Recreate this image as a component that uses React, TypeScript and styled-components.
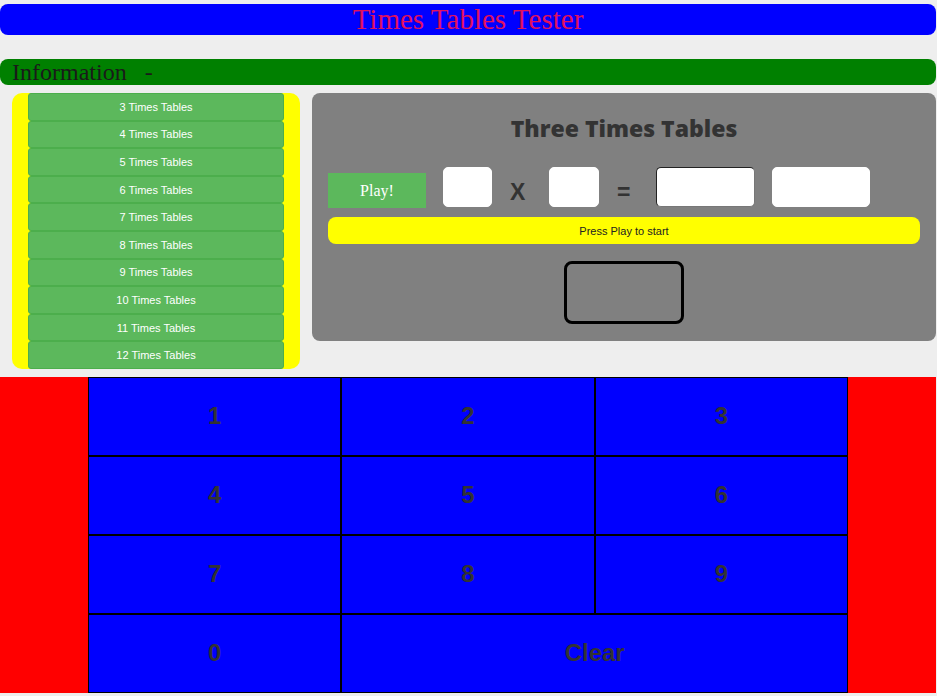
import React from "react";
import styled, { createGlobalStyle } from "styled-components";

const Global = createGlobalStyle`
  html, body { margin: 0; padding: 0; background: #eeeeee; }
  body { font-family: "Liberation Serif", serif; overflow: hidden; }
`;

const Page = styled.div`
  width: 936px;
  padding-top: 4px;
`;

const Header = styled.h1`
  margin: 0;
  height: 31px;
  background: #0000ff;
  border-radius: 8px;
  color: #e0115f;
  font-family: "Liberation Serif", serif;
  font-weight: normal;
  font-size: 29px;
  line-height: 31px;
  text-align: center;
`;

const InfoBar = styled.div`
  margin-top: 24px;
  height: 26px;
  background: #008000;
  border-radius: 8px;
  padding-left: 12px;
  color: #1a1a1a;
  font-family: "Liberation Serif", serif;
  font-size: 24px;
  line-height: 26px;
  white-space: pre;
`;

const Main = styled.div`
  display: flex;
  align-items: flex-start;
  gap: 12px;
  margin-top: 8px;
  padding-left: 12px;
`;

const TablesList = styled.div`
  width: 256px;
  padding: 0 16px;
  background: #ffff00;
  border-radius: 10px;
  display: flex;
  flex-direction: column;
`;

const TableButton = styled.button`
  height: 27.6px;
  box-sizing: border-box;
  background: #5cb85c;
  border: 1px solid #4cae4c;
  border-radius: 3px;
  color: #ffffff;
  font-family: "Liberation Sans", Arial, sans-serif;
  font-size: 11px;
  padding: 0;
  cursor: pointer;
`;

const GamePanel = styled.div`
  flex: 1;
  height: 248px;
  box-sizing: border-box;
  background: #808080;
  border-radius: 8px;
  padding: 20px 16px 0;
  display: flex;
  flex-direction: column;
  align-items: center;
`;

const GameTitle = styled.h2`
  margin: 0;
  height: 30px;
  line-height: 30px;
  color: #333333;
  font-family: "Open Sans", sans-serif;
  font-weight: 800;
  font-size: 23px;
`;

const QuestionRow = styled.div`
  align-self: stretch;
  margin-top: 24px;
  height: 40px;
  display: flex;
  align-items: flex-start;
  gap: 17px;
`;

const PlayButton = styled.button`
  margin-top: 6px;
  width: 98px;
  height: 35px;
  background: #5cb85c;
  border: none;
  color: #ffffff;
  font-family: "Liberation Serif", serif;
  font-size: 16px;
  padding: 0;
`;

const NumberBox = styled.div<{ $w: number; $focus?: boolean }>`
  width: ${(p) => p.$w}px;
  height: 40px;
  box-sizing: border-box;
  background: #ffffff;
  border-radius: 5px;
  border: 1px solid ${(p) => (p.$focus ? "#222" : "#fff")};
  ${(p) => (p.$focus ? "border-right-color: #777; border-bottom-color: #777;" : "")}
`;

const Sign = styled.span`
  width: 23px;
  height: 40px;
  box-sizing: border-box;
  padding-left: 1px;
  line-height: 50px;
  text-align: left;
  color: #333333;
  font-family: "Liberation Sans", Arial, sans-serif;
  font-weight: 700;
  font-size: 23px;
`;

const Status = styled.div`
  align-self: stretch;
  margin-top: 10px;
  height: 27px;
  line-height: 28px;
  background: #ffff00;
  border-radius: 8px;
  text-align: center;
  color: #222;
  font-family: "Liberation Sans", Arial, sans-serif;
  font-size: 11px;
`;

const ResultBox = styled.div`
  margin-top: 17px;
  width: 120px;
  height: 63px;
  box-sizing: border-box;
  border: 3px solid #000;
  border-radius: 8px;
`;

const KeypadArea = styled.div`
  margin-top: 8px;
  background: #ff0000;
  padding: 0 88px;
`;

const Keypad = styled.div`
  display: grid;
  grid-template-columns: repeat(3, 1fr);
  grid-auto-rows: 79px;
  background: #0000ff;
`;

const Key = styled.button<{ $span?: number }>`
  grid-column: span ${(p) => p.$span || 1};
  background: #0000ff;
  border: 1px solid #000;
  color: #333333;
  font-family: "Liberation Sans", Arial, sans-serif;
  font-weight: 700;
  font-size: 24px;
  padding: 0;
`;

const tables = [3, 4, 5, 6, 7, 8, 9, 10, 11, 12];
const keys = ["1", "2", "3", "4", "5", "6", "7", "8", "9"];

export default function App() {
  return (
    <Page>
      <Global />
      <Header>Times Tables Tester</Header>
      <InfoBar>{"Information   -"}</InfoBar>
      <Main>
        <TablesList>
          {tables.map((n) => (
            <TableButton key={n}>{n} Times Tables</TableButton>
          ))}
        </TablesList>
        <GamePanel>
          <GameTitle>Three Times Tables</GameTitle>
          <QuestionRow>
            <PlayButton>Play!</PlayButton>
            <NumberBox $w={49} />
            <Sign>X</Sign>
            <NumberBox $w={50} />
            <Sign>=</Sign>
            <NumberBox $w={99} $focus />
            <NumberBox $w={98} />
          </QuestionRow>
          <Status>Press Play to start</Status>
          <ResultBox />
        </GamePanel>
      </Main>
      <KeypadArea>
        <Keypad>
          {keys.map((k) => (
            <Key key={k}>{k}</Key>
          ))}
          <Key>0</Key>
          <Key $span={2}>Clear</Key>
        </Keypad>
      </KeypadArea>
    </Page>
  );
}
